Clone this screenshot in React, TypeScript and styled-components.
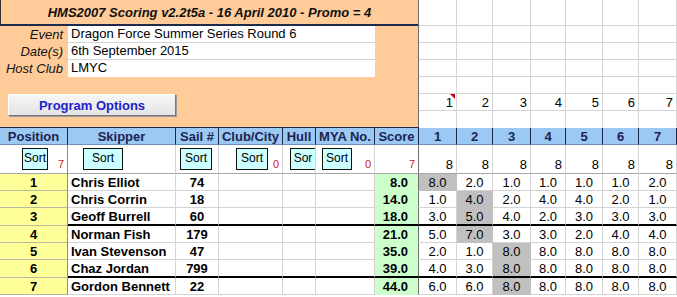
import styled, { createGlobalStyle } from 'styled-components';

const GlobalStyle = createGlobalStyle`
  html, body {
    margin: 0;
    padding: 0;
    background: #fff;
    overflow: hidden;
  }
  body {
    font-family: 'Liberation Sans', Arial, sans-serif;
  }
`;

const COLS = [68, 108, 43, 64, 33, 59, 44, 38, 36, 38, 35, 37, 36, 38];
const ROWS = [26, 17, 17, 17, 17, 17, 17, 17, 29, 17, 17, 18, 17, 17, 18, 17];

const GRID = '#d4d4d4';
const NAVY = '#1f2a4a';

const Sheet = styled.div`
	display: grid;
	grid-template-columns: ${COLS.map((c) => `${c}px`).join(' ')};
	grid-template-rows: ${ROWS.map((r) => `${r}px`).join(' ')};
	width: 677px;
	font-size: 13px;
	color: #000;
`;

const TopPanel = styled.div`
	grid-column: 1 / 8;
	grid-row: 1 / 8;
	display: flex;
	flex-direction: column;
	background: #ffcc99;
	border-right: 1px solid #6d6d6d;
`;

const Title = styled.div`
	box-sizing: border-box;
	height: 26px;
	display: flex;
	align-items: center;
	justify-content: center;
	border-left: 1px solid #333;
	border-bottom: 2px solid ${NAVY};
	font-weight: 700;
	font-style: italic;
	color: #111;
`;

const InfoRow = styled.div`
	display: grid;
	grid-template-columns: 68px 307px;
	height: 17px;
`;

const InfoLabel = styled.div`
	font-style: italic;
	text-align: right;
	padding-right: 5px;
	line-height: 17px;
	color: #111;
`;

const InfoValue = styled.div<{ $last?: boolean }>`
	box-sizing: border-box;
	background: #fff;
	padding-left: 3px;
	line-height: 16px;
	border-bottom: 1px solid ${(p) => (p.$last ? '#fff' : GRID)};
`;

const OptionsButton = styled.button`
	box-sizing: border-box;
	margin: 17px 0 0 8px;
	width: 168px;
	height: 22px;
	padding: 0;
	background: linear-gradient(#f6f6f6, #e4e4e4);
	border: 1px solid;
	border-color: #fff #7a7a7a #7a7a7a #fff;
	box-shadow: 1px 1px 0 #9a9a9a;
	font-family: 'Liberation Sans', Arial, sans-serif;
	font-size: 13px;
	font-weight: 700;
	color: #2222cc;
`;

const GridCell = styled.div<{ $noBottom?: boolean }>`
	box-sizing: border-box;
	position: relative;
	display: flex;
	align-items: center;
	justify-content: flex-end;
	padding-right: 3px;
	border-right: 1px solid ${GRID};
	border-bottom: 1px solid ${(p) => (p.$noBottom ? '#fff' : GRID)};
`;

const CommentMark = styled.span`
	position: absolute;
	top: 0;
	right: 1px;
	width: 0;
	height: 0;
	border-top: 5px solid #c0001a;
	border-left: 5px solid transparent;
`;

const HeaderCell = styled.div`
	box-sizing: border-box;
	display: flex;
	align-items: center;
	justify-content: center;
	background: #9cc8f4;
	border-right: 1px solid ${NAVY};
	border-bottom: 1px solid #6f8fb8;
	box-shadow: 0 -1px 0 ${NAVY};
	font-weight: 700;
	color: #1b2450;
	white-space: nowrap;
	overflow: hidden;
`;

const SortCell = styled.div<{ $offset: number; $edge?: string }>`
	box-sizing: border-box;
	display: flex;
	padding-left: ${(p) => p.$offset}px;
	padding-right: 3px;
	border-right: 1px solid ${(p) => p.$edge ?? GRID};
	border-bottom: 1px solid #a8a8a8;
	overflow: hidden;
`;

const SortButton = styled.button<{ $width: number }>`
	box-sizing: border-box;
	align-self: center;
	flex: none;
	width: ${(p) => p.$width}px;
	height: 22px;
	padding: 0 0 2px;
	background: #ccffff;
	border: 1px solid #111;
	font-family: 'Liberation Sans', Arial, sans-serif;
	font-size: 12px;
	color: #000;
	overflow: hidden;
	white-space: nowrap;
`;

const Count = styled.span<{ $red?: boolean }>`
	align-self: flex-end;
	margin-left: auto;
	padding-bottom: 2px;
	line-height: 13px;
	font-size: ${(p) => (p.$red ? '11px' : '13px')};
	color: ${(p) => (p.$red ? '#d01818' : '#000')};
`;

const Cell = styled.div<{ $thick?: boolean }>`
	box-sizing: border-box;
	display: flex;
	align-items: center;
	white-space: nowrap;
	overflow: hidden;
	border-right: 1px solid ${GRID};
	border-bottom: ${(p) => (p.$thick ? '2px solid #000' : `1px solid ${GRID}`)};
`;

const PosCell = styled(Cell)`
	justify-content: center;
	background: #ffff99;
	font-weight: 700;
	border-right-color: #8a8a8a;
	border-bottom: 1px solid #b8b8a0;
`;

const NameCell = styled(Cell)`
	padding-left: 3px;
	font-weight: 700;
`;

const SailCell = styled(Cell)`
	justify-content: center;
	font-weight: 700;
`;

const ScoreCell = styled(Cell)`
	justify-content: flex-end;
	padding-right: 10px;
	background: #ccffcc;
	font-weight: 700;
	border-right-color: #6d6d6d;
	border-bottom-color: ${(p) => (p.$thick ? '#000' : '#ccffcc')};
`;

const RaceCell = styled(Cell)<{ $discard?: boolean }>`
	justify-content: center;
	background: ${(p) => (p.$discard ? '#c0c0c0' : '#fff')};
	border-right-color: ${(p) => (p.$discard ? '#c0c0c0' : GRID)};
	border-bottom-color: ${(p) => (p.$thick ? '#000' : p.$discard ? '#c0c0c0' : GRID)};
`;

const RACES = ['1', '2', '3', '4', '5', '6', '7'];
const HEADERS = ['Position', 'Skipper', 'Sail #', 'Club/City', 'Hull', 'MYA No.', 'Score'];

const SORTS = [
	{ offset: 22, width: 26, label: 'Sort', count: '7' },
	{ offset: 15, width: 40, label: 'Sort' },
	{ offset: 4, width: 32, label: 'Sort' },
	{ offset: 17, width: 32, label: 'Sort', count: '0' },
	{ offset: 7, width: 26, label: 'Sor' },
	{ offset: 6, width: 30, label: 'Sort', count: '0' },
];

const ENTRANTS = [
	{ name: 'Chris Elliot', sail: '74', score: '8.0', races: ['8.0', '2.0', '1.0', '1.0', '1.0', '1.0', '2.0'], discard: 0 },
	{ name: 'Chris Corrin', sail: '18', score: '14.0', races: ['1.0', '4.0', '2.0', '4.0', '4.0', '2.0', '1.0'], discard: 1 },
	{ name: 'Geoff Burrell', sail: '60', score: '18.0', races: ['3.0', '5.0', '4.0', '2.0', '3.0', '3.0', '3.0'], discard: 1 },
	{ name: 'Norman Fish', sail: '179', score: '21.0', races: ['5.0', '7.0', '3.0', '3.0', '2.0', '4.0', '4.0'], discard: 1 },
	{ name: 'Ivan Stevenson', sail: '47', score: '35.0', races: ['2.0', '1.0', '8.0', '8.0', '8.0', '8.0', '8.0'], discard: 2 },
	{ name: 'Chaz Jordan', sail: '799', score: '39.0', races: ['4.0', '3.0', '8.0', '8.0', '8.0', '8.0', '8.0'], discard: 2 },
	{ name: 'Gordon Bennett', sail: '22', score: '44.0', races: ['6.0', '6.0', '8.0', '8.0', '8.0', '8.0', '8.0'], discard: 2 },
];

// rows that close a group get the heavy rule underneath
const GROUP_ENDS = [2, 5];

export default function App() {
	return (
		<>
			<GlobalStyle />
			<Sheet>
				<TopPanel>
					<Title>HMS2007 Scoring v2.2t5a - 16 April 2010 - Promo = 4</Title>
					<InfoRow>
						<InfoLabel>Event</InfoLabel>
						<InfoValue>Dragon Force Summer Series Round 6</InfoValue>
					</InfoRow>
					<InfoRow>
						<InfoLabel>Date(s)</InfoLabel>
						<InfoValue>6th September 2015</InfoValue>
					</InfoRow>
					<InfoRow>
						<InfoLabel>Host Club</InfoLabel>
						<InfoValue $last>LMYC</InfoValue>
					</InfoRow>
					<OptionsButton>Program Options</OptionsButton>
				</TopPanel>

				{Array.from({ length: 7 }).map((_, row) =>
					RACES.map((race, i) => (
						<GridCell key={`t${row}-${race}`} $noBottom={row === 6}>
							{row === 5 && race}
							{row === 5 && i === 0 && <CommentMark />}
						</GridCell>
					)),
				)}

				{HEADERS.map((h) => (
					<HeaderCell key={h}>{h}</HeaderCell>
				))}
				{RACES.map((r) => (
					<HeaderCell key={`h${r}`}>{r}</HeaderCell>
				))}

				{SORTS.map((s, i) => (
					<SortCell key={`s${i}`} $offset={s.offset} $edge={i === 0 ? '#8a8a8a' : undefined}>
						<SortButton $width={s.width}>{s.label}</SortButton>
						{s.count && <Count $red>{s.count}</Count>}
					</SortCell>
				))}
				<SortCell $offset={0} $edge="#6d6d6d">
					<Count $red>7</Count>
				</SortCell>
				{RACES.map((r) => (
					<SortCell key={`c${r}`} $offset={0}>
						<Count>8</Count>
					</SortCell>
				))}

				{ENTRANTS.map((e, i) => {
					const thick = GROUP_ENDS.includes(i);
					return [
						<PosCell key={`p${i}`}>{i + 1}</PosCell>,
						<NameCell key={`n${i}`} $thick={thick}>{e.name}</NameCell>,
						<SailCell key={`l${i}`} $thick={thick}>{e.sail}</SailCell>,
						<Cell key={`c${i}`} $thick={thick} />,
						<Cell key={`h${i}`} $thick={thick} />,
						<Cell key={`m${i}`} $thick={thick} />,
						<ScoreCell key={`s${i}`} $thick={thick}>{e.score}</ScoreCell>,
						...e.races.map((r, j) => (
							<RaceCell key={`r${i}-${j}`} $thick={thick} $discard={j === e.discard}>
								{r}
							</RaceCell>
						)),
					];
				})}
			</Sheet>
		</>
	);
}
